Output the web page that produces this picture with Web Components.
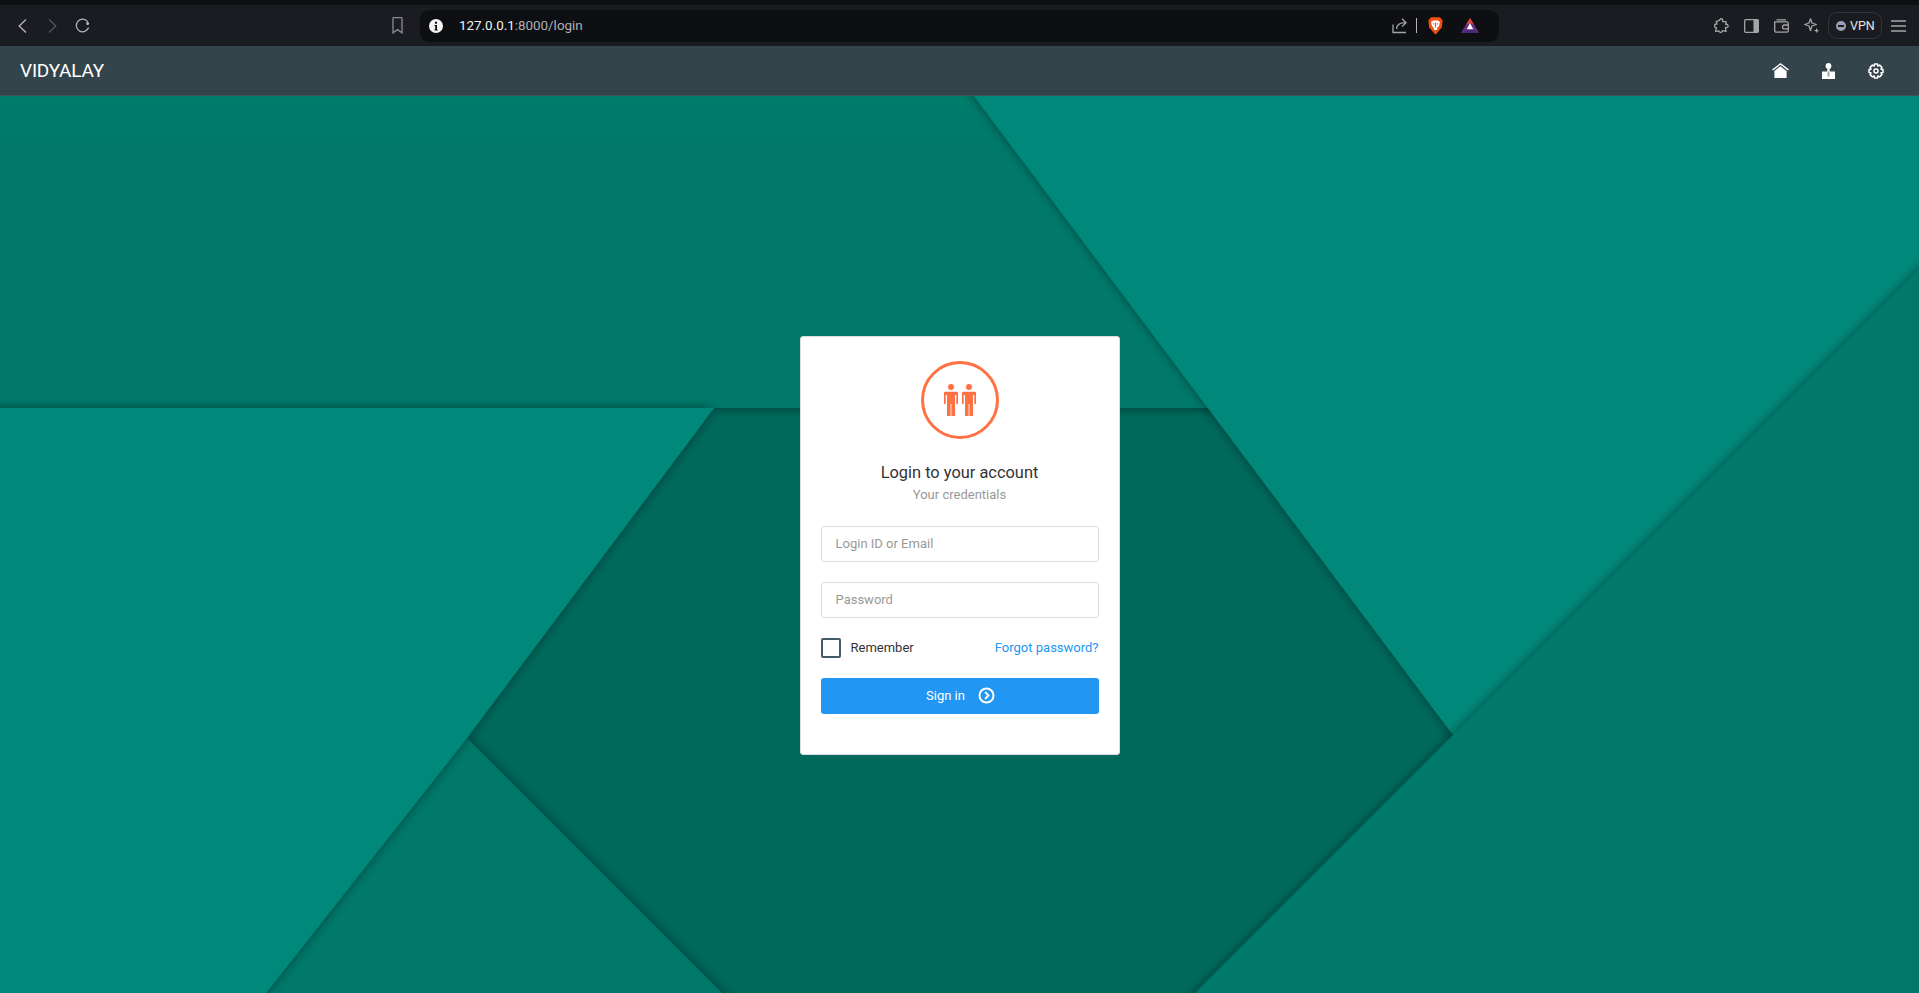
<!DOCTYPE html>
<html lang="en">
<head>
<meta charset="utf-8">
<title>Login</title>
<style>
    html, body { margin: 0; height: 100%; }
    body { display: flex; flex-direction: column; height: 993px; overflow: hidden; background: #00695c; font-family: Roboto, "Liberation Sans", sans-serif; }
</style>
</head>
<body>
<browser-bar url-host="127.0.0.1" url-rest=":8000/login"></browser-bar>
<app-navbar brand="VIDYALAY"></app-navbar>
<login-stage>
    <login-card></login-card>
</login-stage>

<script>
class BrowserBar extends HTMLElement {
    connectedCallback() {
        this.attachShadow({ mode: 'open' });
        this.shadowRoot.innerHTML = `
            <style>
                :host { display: block; flex: none; background: #0e0f13; padding-top: 5px; }
                .bar { height: 41px; background: #1b1c21; display: flex; align-items: center; }
                svg { display: block; flex: none; fill: none; stroke: #a4a5a9; stroke-width: 1.3; }
                .omni { width: 1079px; flex: none; margin-left: 17px; height: 32px; background: #0e0f13; border-radius: 9px; display: flex; align-items: center; box-sizing: border-box; padding: 0 20px 0 9px; }
                .url { margin-left: 16px; font: 13.4px Roboto, sans-serif; color: #f2f2f2; flex: 1; }
                .url span { color: #aeafb3; }
                .sep { width: 1px; height: 15px; background: #b4b4b4; margin: 0 11px 0 9px; }
                .vpn { height: 27px; width: 54px; flex: none; margin-left: 9px; border: 1px solid #33343a; border-radius: 9px; box-sizing: border-box; display: flex; align-items: center; gap: 4px; padding-left: 7px; color: #e4e4e6; font: 400 12.5px Roboto, sans-serif; }
                .dot { width: 10px; height: 10px; border-radius: 50%; background: #9a9fb3; position: relative; flex: none; }
                .dot::after { content: ""; position: absolute; left: 2px; right: 2px; top: 4px; height: 2px; background: #1b1c21; }
            </style>
            <div class="bar">
                <svg style="margin-left:18px;stroke:#b4b5b9" width="9" height="14" viewBox="0 0 9 14"><path d="M8 .5 L1.2 7 L8 13.5"/></svg>
                <svg style="margin-left:21px;stroke:#55565b" width="9" height="14" viewBox="0 0 9 14"><path d="M1 .5 L7.8 7 L1 13.5"/></svg>
                <svg style="margin-left:18px;stroke:#b4b5b9" width="15" height="15" viewBox="0 0 15 15"><path d="M12.9 4 A6.3 6.3 0 1 0 13.6 9.5"/><circle cx="12.6" cy="5.4" r="1.5" fill="#b4b5b9" stroke="none"/></svg>
                <svg style="margin-left:302px;stroke:#8c8d91" width="11" height="17" viewBox="0 0 11 17"><path d="M1 1.2 A.6 .6 0 0 1 1.6 .7 H9.4 A.6 .6 0 0 1 10 1.2 V15.8 L5.5 12.6 L1 15.8 Z"/></svg>
                <div class="omni">
                    <svg width="14" height="14" viewBox="0 0 14 14" style="stroke:none;fill:#f4f4f4"><path fill-rule="evenodd" d="M7 0a7 7 0 1 0 0 14a7 7 0 0 0 0-14zM6 2.8h2v1.9H6zM5.4 5.9h2.6v4.5h.7v1H5.4v-1h.8V6.9h-.8z"/></svg>
                    <div class="url">${this.getAttribute('url-host')}<span>${this.getAttribute('url-rest')}</span></div>
                    <svg width="15" height="16" viewBox="0 0 15 16"><path d="M1 6.5 V14.5 H14 M4.6 11 C4.6 6.5 7.5 4.7 13.6 4.7 M10 .8 L14 4.7 L10 8.6"/></svg>
                    <div class="sep"></div>
                    <svg style="stroke:none" width="15" height="18" viewBox="0 0 15 18"><path fill="#f1500f" d="M3 .3 H12 L14.6 3.4 L13.8 10.4 L7.5 17.7 L1.2 10.4 L.4 3.4 Z"/><path fill="#fff" d="M3 5 L5.2 3.4 H9.8 L12 5 L11 9 L9.2 11 L9 13 H6 L5.8 11 L4 9 Z"/><path fill="#f1500f" d="M6.9 5.4 H8.1 V10.4 H6.9 Z M4.6 6.2 L6.2 6.6 L6 7.4 L5 7.2 Z M10.4 6.2 L8.8 6.6 L9 7.4 L10 7.2 Z"/></svg>
                    <svg style="stroke:none;margin-left:18px" width="18" height="15" viewBox="0 0 18 15"><path fill="#6a2c86" d="M9 0 L18 15 H0 Z"/><path fill="#e8432e" d="M9 0 L13 6.7 L9 5 L5 6.7 Z"/><path fill="#fff" d="M9 5 L12.4 11.4 H5.6 Z"/><path fill="#4a2a78" d="M5.6 11.4 H12.4 L18 15 H0 Z"/></svg>
                </div>
                <svg style="margin-left:215px" width="15" height="15" viewBox="0 0 15 15"><path d="M5.6 2.4 C5.6 .2 8.8 .2 8.8 2.4 C8.8 3 8.6 3.2 8.6 3.6 H12.2 L11.6 6.4 C13.8 5.6 15.6 9 12.6 9.6 L11.4 9.4 L12 13.4 L8.4 12.6 C8.6 14.6 5 15 5 12.8 L1.6 13.4 L2.4 9.6 C.2 10 -.4 6.4 2.2 6 L3 6.2 L2.2 3.4 Z" stroke-linejoin="round"/></svg>
                <svg style="margin-left:15px" width="15" height="14" viewBox="0 0 15 14"><rect x=".7" y=".7" width="13.6" height="12.6" rx="1"/><rect x="9.5" y=".7" width="5" height="12.6" fill="#a4a5a9" stroke="none"/></svg>
                <svg style="margin-left:15px" width="15" height="14" viewBox="0 0 15 14"><path d="M2.5 .8 H12 M.7 2.8 V11.5 A1.7 1.7 0 0 0 2.4 13.2 H12.6 A1.7 1.7 0 0 0 14.3 11.5 V4.5 A1.7 1.7 0 0 0 12.6 2.8 H.7 Z M14.3 6 H10.4 A1.6 1.6 0 0 0 10.4 9.8 H14.3"/></svg>
                <svg style="margin-left:15px" width="15" height="15" viewBox="0 0 15 15"><path d="M6.5 .8 L8 5 L12.4 6.5 L8 8 L6.5 12.6 L5 8 L.7 6.5 L5 5 Z" stroke-linejoin="round"/><path d="M10.6 12.6 H14.6 M12.6 10.6 V14.6" stroke-width="1.2"/></svg>
                <div class="vpn"><span class="dot"></span>VPN</div>
                <svg style="margin-left:9px" width="15" height="12" viewBox="0 0 15 12"><path d="M0 1 H15 M0 6 H15 M0 11 H15"/></svg>
            </div>
        `;
    }
}

class AppNavbar extends HTMLElement {
    connectedCallback() {
        this.attachShadow({ mode: 'open' });
        this.shadowRoot.innerHTML = `
            <style>
                :host { display: flex; flex: none; align-items: center; height: 50px; box-sizing: border-box; background: #34444b; color: #fff; padding: 0 35px 0 20px; border-bottom: 1px solid #465257; }
                .brand { font: 400 19px Roboto, sans-serif; flex: 1; letter-spacing: -0.2px; }
                svg { display: block; fill: #fff; }
                .links { display: flex; gap: 33px; align-items: center; }
            </style>
            <div class="brand">${this.getAttribute('brand')}</div>
            <div class="links">
                <svg width="17" height="15" viewBox="0 0 17 15"><path d="M8.5 0 L0 6.6 L1 7.6 L8.5 1.8 L16 7.6 L17 6.6 Z"/><path d="M8.5 3.2 L2.4 8 V15 H14.6 V8 Z"/></svg>
                <svg width="13" height="16" viewBox="0 0 13 16"><ellipse cx="6.5" cy="3" rx="2.9" ry="3"/><path d="M5.3 5.5 H7.7 V8.5 H13 V16 H0 V8.5 H5.3 Z"/><path d="M5.8 8.5 H7.2 L7.6 12.5 L6.5 14.6 L5.4 12.5 Z" fill="#9aa5aa"/></svg>
                <svg width="16" height="16" viewBox="0 0 16 16" style="fill:none;stroke:#fff;stroke-width:1.5"><circle cx="8" cy="8" r="2"/><path d="M6.6 1 H9.4 L9.8 3 L11.6 2.1 L13.9 4.4 L13 6.2 L15 6.6 V9.4 L13 9.8 L13.9 11.6 L11.6 13.9 L9.8 13 L9.4 15 H6.6 L6.2 13 L4.4 13.9 L2.1 11.6 L3 9.8 L1 9.4 V6.6 L3 6.2 L2.1 4.4 L4.4 2.1 L6.2 3 Z" stroke-linejoin="round"/></svg>
            </div>
        `;
    }
}

class LoginStage extends HTMLElement {
    connectedCallback() {
        this.attachShadow({ mode: 'open' });
        // wallpaper, coordinates relative to the top of this element (y=96 on screen)
        this.shadowRoot.innerHTML = `
            <style>
                :host { display: flex; flex: 1; align-items: center; justify-content: center; position: relative; overflow: hidden; background: #00695c; padding-top: 2px; }
                svg { position: absolute; inset: 0; width: 100%; height: 100%; }
                ::slotted(*) { position: relative; }
            </style>
            <svg viewBox="0 0 1919 897" preserveAspectRatio="none">
                <defs>
                    <filter id="s" filterUnits="userSpaceOnUse" x="-100" y="-100" width="2200" height="1200">
                        <feGaussianBlur in="SourceAlpha" stdDeviation="6"/>
                        <feComponentTransfer><feFuncA type="linear" slope="0.45"/></feComponentTransfer>
                        <feMerge><feMergeNode/><feMergeNode in="SourceGraphic"/></feMerge>
                    </filter>
                    <linearGradient id="top" x1="0" y1="0" x2="0" y2="1">
                        <stop offset="0" stop-color="#007d6c"/>
                        <stop offset="0.25" stop-color="#00796b"/>
                    </linearGradient>
                </defs>
                <polygon points="-40,-40 1400,-40 1400,312 -40,312" fill="url(#top)" filter="url(#s)"/>
                <polygon points="944,-40 1960,-40 1960,132 1498,699" fill="#00897a" filter="url(#s)"/>
                <polygon points="467,642 785,960 200,960" fill="#00796b" filter="url(#s)"/>
                <polygon points="-40,312 714,312 467,642 266,897 215,960 -40,960" fill="#00897a" filter="url(#s)"/>
                <polygon points="1960,132 1132,960 1960,960" fill="#00796b" filter="url(#s)"/>
            </svg>
            <slot></slot>
        `;
    }
}

class LoginCard extends HTMLElement {
    connectedCallback() {
        this.attachShadow({ mode: 'open' });
        this.shadowRoot.innerHTML = `
            <style>
                :host { display: block; width: 320px; box-sizing: border-box; background: #fff; border: 1px solid #ddd; border-radius: 3px; padding: 24px 20px 40px; color: #333; font: 13px/20px Roboto, sans-serif; }
                .badge { width: 78px; height: 78px; box-sizing: border-box; border: 3px solid #ff7043; border-radius: 50%; margin: 0 auto; display: flex; align-items: center; justify-content: center; }
                h5 { margin: 22px 0 0; font: 400 16.4px/24px Roboto, sans-serif; text-align: center; }
                .sub { text-align: center; color: #999; line-height: 20px; margin-bottom: 21px; }
                .field { display: block; width: 100%; height: 36px; box-sizing: border-box; border: 1px solid #ddd; border-radius: 3px; padding: 6px 14px 8px; font: 13px Roboto, sans-serif; color: #333; margin-bottom: 20px; outline: none; }
                .field::placeholder { color: #999; opacity: 1; }
                .row { display: flex; align-items: center; justify-content: space-between; height: 20px; margin-bottom: 20px; }
                .check { display: flex; align-items: center; gap: 10px; }
                .box { width: 20px; height: 20px; box-sizing: border-box; border: 2px solid #455a64; border-radius: 2px; }
                a { color: #2196f3; text-decoration: none; }
                button { width: 100%; height: 36px; border: 0; border-radius: 3px; background: #2196f3; color: #fff; font: 13px Roboto, sans-serif; display: flex; align-items: center; justify-content: center; gap: 13px; padding: 0 0 2px 2px; }
                svg { display: block; }
            </style>
            <div class="badge">
                <svg width="32" height="32" viewBox="0 0 32 32" fill="#ff7043"><g id="p"><circle cx="7" cy="3" r="3"/><path d="M1 7.7 H13 a1 1 0 0 1 1 1 V20 H12.3 V11 H11 V32 H7.4 V20 H6.6 V32 H3 V11 H1.7 V20 H0 V8.7 a1 1 0 0 1 1-1 Z"/></g><use href="#p" x="18"/></svg>
            </div>
            <h5>Login to your account</h5>
            <div class="sub">Your credentials</div>
            <input class="field" placeholder="Login ID or Email">
            <input class="field" type="password" placeholder="Password">
            <div class="row">
                <label class="check"><span class="box"></span>Remember</label>
                <a href="#">Forgot password?</a>
            </div>
            <button type="button">Sign in
                <svg width="17" height="17" viewBox="0 0 17 17" fill="none" stroke="#fff" stroke-width="2"><circle cx="8.5" cy="8.5" r="7"/><path d="M7 5 L10.5 8.5 L7 12"/></svg>
            </button>
        `;
    }
}

customElements.define('browser-bar', BrowserBar);
customElements.define('app-navbar', AppNavbar);
customElements.define('login-stage', LoginStage);
customElements.define('login-card', LoginCard);
</script>
</body>
</html>
